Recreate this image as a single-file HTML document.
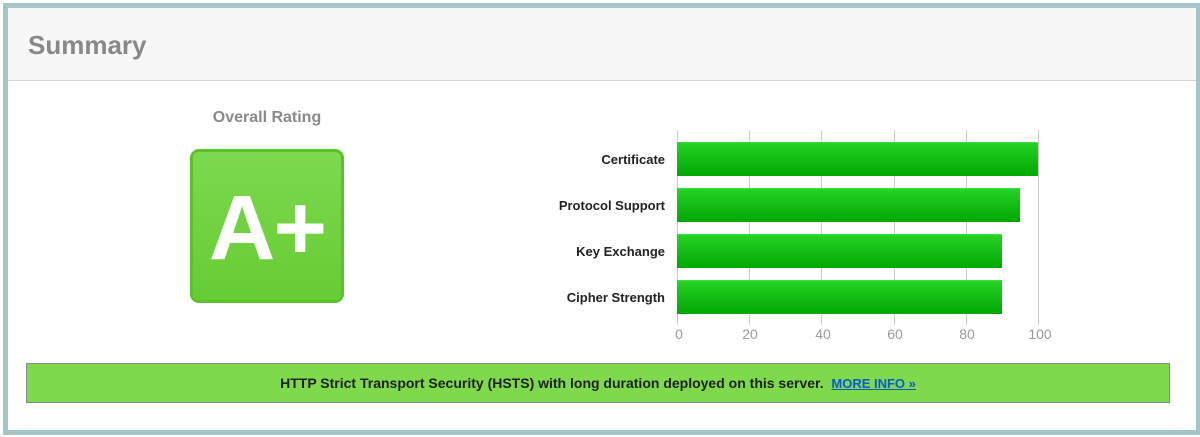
<!DOCTYPE html>
<html><head><style>
body{margin:0;width:1200px;height:437px;background:#fff;font-family:"Liberation Sans",Arial,sans-serif;position:relative;overflow:hidden}
.frame{position:absolute;left:3px;top:3px;width:1188px;height:422px;border:5px solid #a6c5c7;box-sizing:content-box;background:#fff}
.hdr{position:absolute;left:0;top:0;right:0;height:72px;background:#f7f7f7;border-bottom:1px solid #cfd6d8}
.hdr span{position:absolute;left:20px;top:22px;font-size:26px;font-weight:bold;color:#888}
.abs{position:absolute}
.lab{position:absolute;right:535px;font-size:13px;font-weight:bold;color:#222;text-align:right;width:200px}
.bar{position:absolute;left:677px;height:33px;background:linear-gradient(#26d226,#00a800);border-top:1px solid #3be03b}
.grid{position:absolute;top:130px;height:195px;width:1px;background:#ccc}
.ax{position:absolute;top:326px;font-size:14px;color:#999;width:40px;text-align:center}
</style></head><body>
<div class="frame">
<div class="hdr"><span>Summary</span></div>
</div>
<div class="abs" style="left:170px;top:109px;width:194px;text-align:center;font-size:16px;font-weight:bold;color:#8a8a8a">Overall Rating</div>
<div class="abs" style="left:190px;top:149px;width:148px;height:148px;border:3px solid #5cc22a;border-radius:9px;background:linear-gradient(#7dd94f,#66cc33);color:#fff;font-weight:bold;font-size:92px;text-align:center;line-height:152px;letter-spacing:-2px">A+</div>

<div class="grid" style="left:677px"></div>
<div class="grid" style="left:749px"></div>
<div class="grid" style="left:821px"></div>
<div class="grid" style="left:894px"></div>
<div class="grid" style="left:966px"></div>
<div class="grid" style="left:1038px"></div>

<div class="bar" style="top:142px;width:361px"></div>
<div class="bar" style="top:188px;width:343px"></div>
<div class="bar" style="top:234px;width:325px"></div>
<div class="bar" style="top:280px;width:325px"></div>

<div class="lab" style="top:152px">Certificate</div>
<div class="lab" style="top:198px">Protocol Support</div>
<div class="lab" style="top:244px">Key Exchange</div>
<div class="lab" style="top:290px">Cipher Strength</div>

<div class="ax" style="left:659px">0</div>
<div class="ax" style="left:730px">20</div>
<div class="ax" style="left:803px">40</div>
<div class="ax" style="left:875px">60</div>
<div class="ax" style="left:947px">80</div>
<div class="ax" style="left:1020px">100</div>

<div class="abs" style="left:26px;top:363px;width:1142px;height:38px;background:#7ed94b;border:1px solid #8a8a8a;text-align:center;line-height:38px;font-size:14px;font-weight:bold;color:#222">HTTP Strict Transport Security (HSTS) with long duration deployed on this server. &nbsp;<span style="color:#0a5ad8;text-decoration:underline;font-size:13px">MORE INFO »</span></div>
</body></html>
